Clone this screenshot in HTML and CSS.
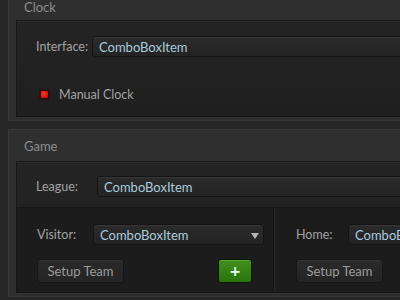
FILE: index.html
```html
<!DOCTYPE html>
<html>
<head>
<meta charset="utf-8">
<link rel="stylesheet" href="styles.css">
</head>
<body>
<div class="page">
  <section class="group group-clock">
    <div class="group-title clock-title">Clock</div>
    <div class="frame clock-frame">
      <div class="row iface-row">
        <span class="label iface-label">Interface:</span>
        <div class="combo wide"><span class="combo-text">ComboBoxItem</span></div>
      </div>
      <div class="row check-row">
        <span class="led"></span>
        <span class="label">Manual Clock</span>
      </div>
    </div>
  </section>
  <section class="group group-game">
    <div class="group-title">Game</div>
    <div class="frame game-frame">
      <div class="row league-row">
        <span class="label league-label">League:</span>
        <div class="combo wide"><span class="combo-text">ComboBoxItem</span></div>
      </div>
      <div class="teams">
        <div class="team visitor">
          <div class="row team-row">
            <span class="label team-label">Visitor:</span>
            <div class="combo visitor-combo"><span class="combo-text">ComboBoxItem</span><span class="arrow"></span></div>
          </div>
          <div class="row btn-row">
            <button class="btn">Setup Team</button>
            <button class="btn-add">+</button>
          </div>
        </div>
        <div class="team home">
          <div class="row team-row">
            <span class="label home-label">Home:</span>
            <div class="combo wide"><span class="combo-text">ComboBoxItem</span></div>
          </div>
          <div class="row btn-row">
            <button class="btn">Setup Team</button>
          </div>
        </div>
      </div>
    </div>
  </section>
</div>
</body>
</html>
```

FILE: styles.css
```css
html, body {
  margin: 0;
  padding: 0;
  width: 400px;
  height: 300px;
  overflow: hidden;
  background: #272727;
  font-family: "Lato", "Noto Sans", sans-serif;
  font-size: 12.5px;
}
.page {
  width: 440px;
  padding-left: 8px;
}
.group {
  background: #2f2f2f;
  border: 1px solid #3a3a3a;
  border-right: none;
  padding: 0 0 3px 7px;
}
.group-clock {
  margin-top: -12px;
}
.group-game {
  margin-top: 8px;
}
.group-title {
  height: 29px;
  line-height: 29px;
  padding: 2px 0 0 8px;
  color: #8c8c8c;
  font-size: 13px;
}
.group-title.clock-title {
  height: 14px;
  line-height: 14px;
  padding: 11px 0 6px 8px;
}
.frame {
  background: linear-gradient(#242424, #1f1f1f);
  border: 1px solid #171717;
  border-right: none;
  box-shadow: inset 0 1px 0 #2c2c2c;
}
.clock-frame {
  padding: 15px 0 0 19px;
  height: 80px;
}
.row {
  display: flex;
  align-items: center;
}
.label {
  color: #a2a2a2;
}
.iface-label { width: 56px; }
.league-label { width: 61px; }
.team-label { width: 56px; }
.home-label { width: 52px; }
.combo {
  height: 19px;
  border: 1px solid #141414;
  border-radius: 3px;
  background: linear-gradient(#2b2b2b, #232323);
  box-shadow: inset 0 1px 0 #353535;
  display: flex;
  align-items: center;
  padding-left: 6px;
  position: relative;
}
.combo.wide { flex: 1; }
.combo-text {
  color: #a9cbde;
  font-size: 13px;
}
.visitor-combo {
  width: 163px;
}
.arrow {
  position: absolute;
  right: 4px;
  top: 8px;
  width: 0;
  height: 0;
  border-left: 4px solid transparent;
  border-right: 4px solid transparent;
  border-top: 6px solid #b5b5b5;
}
.check-row {
  margin-top: 30px;
  padding-left: 4px;
}
.led {
  width: 7px;
  height: 7px;
  background: radial-gradient(circle at 40% 40%, #ff3a2a, #b20000);
  border: 1px solid #3a0808;
  box-shadow: 0 0 0 1px #1a1a1a;
  margin-right: 10px;
}
.game-frame {
  padding-top: 14px;
}
.league-row {
  padding-left: 19px;
  height: 21px;
}
.teams {
  display: flex;
  margin-top: 10px;
  border-top: 1px solid #151515;
  background: #1c1c1c;
  height: 84px;
}
.team {
  padding: 16px 0 0 19px;
}
.visitor {
  width: 236px;
  border-right: 1px solid #141414;
  box-shadow: 1px 0 0 #262626, 3px 0 0 #1f1f1f;
  margin-left: 1px;
}
.home {
  flex: 1;
  padding-left: 22px;
}
.btn-row {
  margin-top: 14px;
  justify-content: space-between;
}
.visitor .btn-row { padding-right: 21px; }
.btn {
  height: 24px;
  width: 87px;
  border: 1px solid #161616;
  border-radius: 3px;
  background: linear-gradient(#2a2a2a, #242424);
  box-shadow: inset 0 1px 0 #323232;
  color: #9c9c9c;
  font-family: inherit;
  font-size: 13px;
  padding: 0;
}
.btn-add {
  height: 24px;
  width: 34px;
  border: 1px solid #0e1a08;
  border-radius: 3px;
  background: linear-gradient(#40911d, #2a730e);
  box-shadow: inset 0 1px 0 #56a634;
  color: #eaffea;
  font-family: "DejaVu Sans", sans-serif;
  font-weight: bold;
  font-size: 14px;
  padding: 0;
}
```
